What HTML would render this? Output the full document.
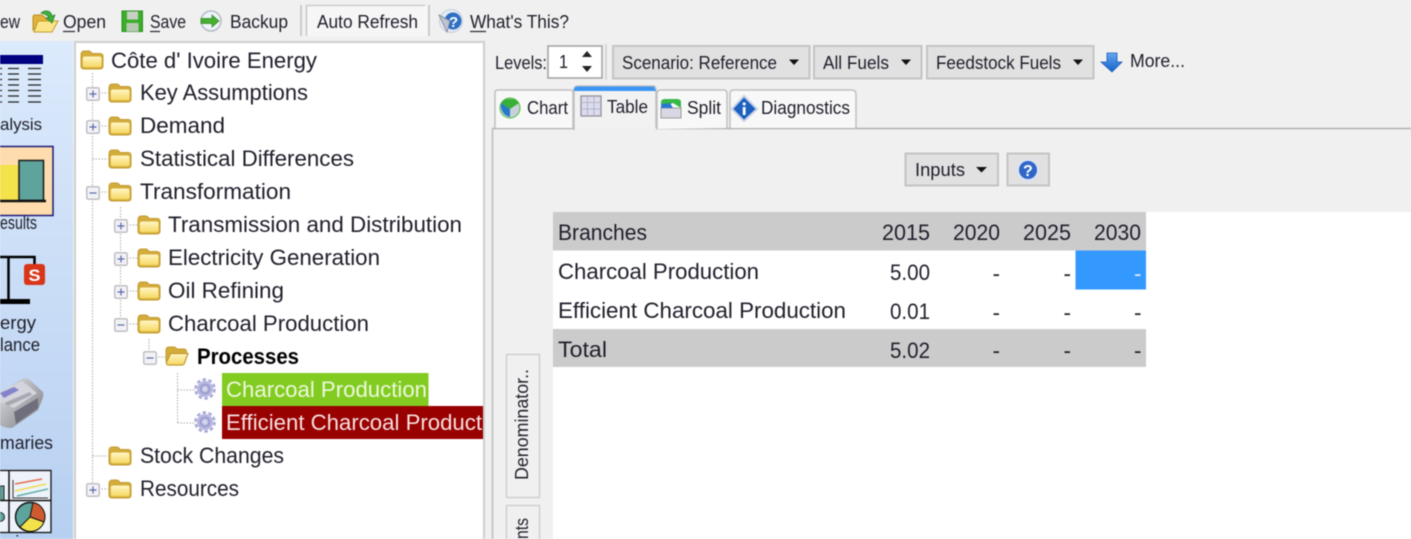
<!DOCTYPE html>
<html><head><meta charset="utf-8"><style>
html,body{margin:0;padding:0;background:#f0f0f0;width:1411px;height:539px;overflow:hidden}
svg{display:block;filter:blur(.45px)}
text{font-family:"Liberation Sans",sans-serif;fill:#20202c}
.t{font-size:22.5px}.m{font-size:18.5px}.d{stroke:#aaa;stroke-width:1;stroke-dasharray:1.5 1.5;fill:none}
.b{fill:#e1e1e1;stroke:#c4c4c4;stroke-width:2}
</style></head><body>
<svg width="1411" height="539" viewBox="0 0 1411 539" xmlns="http://www.w3.org/2000/svg">
<defs>
<linearGradient id="side" x1="0" y1="0" x2="0" y2="1"><stop offset="0" stop-color="#dceafc"/><stop offset="1" stop-color="#b7d0f1"/></linearGradient>
<linearGradient id="fg" x1="0" y1="0" x2="0" y2="1"><stop offset="0" stop-color="#fff6c4"/><stop offset="1" stop-color="#f5d862"/></linearGradient>
<linearGradient id="bl" x1="0" y1="0" x2="0" y2="1"><stop offset="0" stop-color="#62a8f0"/><stop offset="1" stop-color="#1560c8"/></linearGradient>
<linearGradient id="sm" x1="0" y1="0" x2="1" y2="1"><stop offset="0" stop-color="#e4e4ea"/><stop offset="1" stop-color="#77777f"/></linearGradient>
<symbol id="folder" viewBox="0 0 24 20" overflow="visible">
<path d="M1 5Q1 1 4.500 1H8.500Q10.500 1 12 3.500H20Q23 3.500 23 6.500V16Q23 19 20 19H4Q1 19 1 16Z" fill="#d4ac3c" stroke="#c29a30" stroke-width="1"/>
<path d="M2.800 8.500Q2.800 6.500 5 6.500H19.500Q21.500 6.500 21.500 8.500V15.500Q21.500 17.300 19.500 17.300H4.800Q2.800 17.300 2.800 15.500Z" fill="url(#fg)"/>
</symbol>
<symbol id="ofolder" viewBox="0 0 24 20" overflow="visible">
<path d="M1 15V4.500Q1 1 4 1H8.500Q10.500 1 12 3H19Q21.500 3 21.500 6V9H7Z" fill="#d4ac3c" stroke="#c29a30"/>
<path d="M5.500 7.500H23L19.500 17Q19 19 17 19H3.500Q1 19 1.500 16.500Z" fill="url(#fg)" stroke="#c29a30" stroke-width="1.200"/>
</symbol>
<symbol id="plus" viewBox="0 0 14 14" overflow="visible">
<rect x=".75" y=".75" width="12.500" height="12.500" rx="1.500" fill="#f2f2f6" stroke="#c0c0c4" stroke-width="1.500"/>
<path d="M3.500 7H10.500M7 3.500V10.500" stroke="#5a6aa8" stroke-width="1.200"/>
</symbol>
<symbol id="minus" viewBox="0 0 14 14" overflow="visible">
<rect x=".75" y=".75" width="12.500" height="12.500" rx="1.500" fill="#f2f2f6" stroke="#c0c0c4" stroke-width="1.500"/>
<path d="M3.500 7H10.500" stroke="#5a6aa8" stroke-width="1.200"/>
</symbol>
<symbol id="gear" viewBox="0 0 22 22" overflow="visible">
<circle cx="11" cy="11" r="8" fill="#b6b6e0"/>
<circle cx="11" cy="11" r="9.500" fill="none" stroke="#a8a8d8" stroke-width="2.500" stroke-dasharray="3.500 2.500"/>
<circle cx="11" cy="11" r="4.500" fill="none" stroke="#9a9acb" stroke-width="1.500"/>
<circle cx="11" cy="11" r="2.500" fill="#d4d4ec"/>
</symbol>
</defs>

<rect width="1411" height="539" fill="#f0f0f0"/>

<!-- sidebar -->
<rect x="0" y="41" width="73" height="498" fill="url(#side)"/>
<rect x="0" y="55" width="43" height="9" fill="#000080"/>
<path d="M0 68.500H2M8 68.500H19M28 68.500H41M0 74H2M8 74H19M28 74H41M0 79.500H2M8 79.500H19M28 79.500H41M0 85H2M8 85H19M28 85H41M0 90.500H2M8 90.500H19M28 90.500H41M0 96H2M8 96H19M28 96H41M0 102H2M8 102H19M28 102H41" stroke="#222" stroke-width="1.300"/>
<text x="0" y="130" textLength="42" lengthAdjust="spacingAndGlyphs" style="font-size:17px">alysis</text>
<rect x="-2" y="146.500" width="55" height="69" fill="#ffdcae" stroke="#1a1a78" stroke-width="1.500"/>
<rect x="0" y="165" width="19" height="35" fill="#f4e24a"/>
<rect x="19" y="160.500" width="24.500" height="40" fill="#5ea39c" stroke="#222" stroke-width="1.600"/>
<path d="M0 201H46" stroke="#111" stroke-width="2.500"/>
<text x="0" y="229" textLength="37" lengthAdjust="spacingAndGlyphs" style="font-size:18px">esults</text>
<path d="M0 257H34.500V265M8.500 257V300" fill="none" stroke="#000" stroke-width="2.500"/>
<path d="M0 301.500H30" stroke="#000" stroke-width="5"/>
<rect x="24" y="264" width="21" height="21" rx="3" fill="#d8361a"/>
<text x="28.500" y="281" style="font-size:17px;font-weight:bold;fill:#fff" textLength="12" lengthAdjust="spacingAndGlyphs">S</text>
<text x="0" y="329" textLength="36" lengthAdjust="spacingAndGlyphs" style="font-size:18px">ergy</text>
<text x="0" y="351" textLength="40" lengthAdjust="spacingAndGlyphs" style="font-size:18px">lance</text>
<path d="M0 394Q12 384 22 379Q26 377 30 380L43 392Q44 396 42 400L38 410L12 428Q4 428 0 425Z" fill="url(#sm)"/>
<path d="M0 392L22 381L37 393L14 408L0 402Z" fill="#d4d4dc"/>
<path d="M0 393L14 387L19 390L4 398Z" fill="#8484cc"/>
<path d="M4 403L30 392L32 395L8 406Z" fill="#a8a8b0"/>
<path d="M14 412L38 398L38 408L16 424Z" fill="#6e6e7c"/>
<text x="0" y="449" textLength="53" lengthAdjust="spacingAndGlyphs" style="font-size:18px">maries</text>
<rect x="-2" y="470.500" width="53" height="62" fill="#eef2fa" stroke="#111" stroke-width="1.300"/>
<path d="M9 470V532M0 500.500H51" stroke="#111" stroke-width="1.500"/>
<rect x="0" y="486" width="4" height="14" fill="#5ea39c" stroke="#222"/>
<path d="M13 480V498H48" fill="none" stroke="#333" stroke-width="1"/>
<path d="M15 484L42 479" stroke="#e07050" stroke-width="1.500"/>
<path d="M15 491L46 484" stroke="#eedc50" stroke-width="1.500"/>
<path d="M17 496L48 489" stroke="#60b0a8" stroke-width="1.500"/>
<circle cx="0" cy="517" r="4.500" fill="#5ea39c" stroke="#222"/>
<circle cx="30" cy="517" r="14.500" fill="#5ea39c" stroke="#111" stroke-width="1.400"/>
<path d="M30 517L33 502.500A14.500 14.500 0 0 1 44 522Z" fill="#d05a30" stroke="#111"/>
<path d="M30 517L44 522A14.500 14.500 0 0 1 20 527Z" fill="#f4e24a" stroke="#111"/>
<rect x="16.500" y="535" width="1.500" height="1.500" fill="#222"/>

<!-- toolbar -->
<text x="0" y="28" class="m" textLength="20" lengthAdjust="spacingAndGlyphs">ew</text>
<path d="M33 30V17Q33 15 35 15H42L47 19H53V24H39Z" fill="#e0b23a" stroke="#b8901f"/>
<path d="M38 21H58L52 32H34Z" fill="#fbe48a" stroke="#c49c28"/>
<path d="M41 13C46 9 51 11 52 16L55 15L52 23L46 18L49 17.500C47 14.500 44 14 41 13Z" fill="#42ae3e" stroke="#237c25" stroke-width=".7"/>
<text x="63" y="28" class="m" textLength="43" lengthAdjust="spacingAndGlyphs">Open</text>
<path d="M63 31.500H75" stroke="#252530" stroke-width="1.200"/>
<rect x="122" y="11" width="20.500" height="20.500" fill="#3cae2a" stroke="#2a9020"/>
<rect x="127" y="11.500" width="11" height="8" fill="#c8d0c4"/>
<rect x="126.500" y="23" width="12" height="8.500" fill="#b8c8b4"/>
<text x="150" y="28" class="m" textLength="36" lengthAdjust="spacingAndGlyphs">Save</text>
<path d="M150 31.500H160" stroke="#252530" stroke-width="1.200"/>
<circle cx="211" cy="21" r="10" fill="#eef3fa" stroke="#b4bcc6" stroke-width="1.500"/>
<path d="M220 21L213 15V18.500H202V23.500H213V27Z" transform="translate(-1 0)" fill="#48b030" stroke="#2a8a20" stroke-width=".7"/>
<text x="230" y="28" class="m" textLength="58" lengthAdjust="spacingAndGlyphs">Backup</text>
<path d="M301 5V36M429 5V36" stroke="#c0c0c0" stroke-width="1.500"/>
<rect x="306.500" y="5.500" width="121" height="31" fill="#f6f6f6"/>
<path d="M306.500 36V5.500H425" fill="none" stroke="#c4c4c4" stroke-width="1.300"/>
<text x="317" y="28" class="m" textLength="101" lengthAdjust="spacingAndGlyphs">Auto Refresh</text>
<circle cx="451" cy="21" r="11.500" fill="#e4eaf2" stroke="#c4cedc"/>
<circle cx="453" cy="21" r="8.500" fill="#2f6fc4"/>
<path d="M439 15L450 21L447 32Z" fill="#c0c4d0" stroke="#7a8292" stroke-width=".8"/>
<text x="449" y="27" style="font-size:15px;font-weight:bold;fill:#fff">?</text>
<text x="470" y="28" class="m" textLength="99" lengthAdjust="spacingAndGlyphs">What's This?</text>
<path d="M470 31.500H486" stroke="#252530" stroke-width="1.200"/>

<!-- tree -->
<rect x="75" y="42" width="409" height="498" fill="#fff" stroke="#cfcfcf" stroke-width="2"/>
<path class="d" d="M92.500 73V489M92.500 159H108M92.500 456H108M92.500 93H108M92.500 126H108M92.500 192H108M92.500 489H108"/>
<path class="d" d="M120.500 207V324M120.500 225H137M120.500 258H137M120.500 291H137M120.500 324H137"/>
<path class="d" d="M149 339V357M149 357H165"/>
<path class="d" d="M177.500 373V423M177.500 390H195M177.500 423H195"/>
<use href="#plus" x="86" y="87" width="14" height="14"/>
<use href="#plus" x="86" y="120" width="14" height="14"/>
<use href="#minus" x="86" y="186" width="14" height="14"/>
<use href="#plus" x="114" y="219" width="14" height="14"/>
<use href="#plus" x="114" y="252" width="14" height="14"/>
<use href="#plus" x="114" y="285" width="14" height="14"/>
<use href="#minus" x="114" y="318" width="14" height="14"/>
<use href="#minus" x="143" y="351" width="14" height="14"/>
<use href="#plus" x="86" y="483" width="14" height="14"/>
<use href="#folder" x="80" y="50" width="24" height="20"/>
<use href="#folder" x="108" y="83" width="24" height="20"/>
<use href="#folder" x="108" y="116" width="24" height="20"/>
<use href="#folder" x="108" y="149" width="24" height="20"/>
<use href="#folder" x="108" y="182" width="24" height="20"/>
<use href="#folder" x="137" y="215" width="24" height="20"/>
<use href="#folder" x="137" y="248" width="24" height="20"/>
<use href="#folder" x="137" y="281" width="24" height="20"/>
<use href="#folder" x="137" y="314" width="24" height="20"/>
<use href="#ofolder" x="165" y="346" width="24" height="20"/>
<use href="#folder" x="108" y="446" width="24" height="20"/>
<use href="#folder" x="108" y="479" width="24" height="20"/>
<use href="#gear" x="194" y="378" width="22" height="22"/>
<use href="#gear" x="194" y="411" width="22" height="22"/>
<text x="111" y="68" class="t" textLength="206" lengthAdjust="spacingAndGlyphs">Côte d' Ivoire Energy</text>
<text x="140" y="100" class="t" textLength="168" lengthAdjust="spacingAndGlyphs">Key Assumptions</text>
<text x="140" y="133" class="t" textLength="85" lengthAdjust="spacingAndGlyphs">Demand</text>
<text x="140" y="166" class="t" textLength="214" lengthAdjust="spacingAndGlyphs">Statistical Differences</text>
<text x="140" y="199" class="t" textLength="151" lengthAdjust="spacingAndGlyphs">Transformation</text>
<text x="168" y="232" class="t" textLength="294" lengthAdjust="spacingAndGlyphs">Transmission and Distribution</text>
<text x="168" y="265" class="t" textLength="212" lengthAdjust="spacingAndGlyphs">Electricity Generation</text>
<text x="168" y="298" class="t" textLength="116" lengthAdjust="spacingAndGlyphs">Oil Refining</text>
<text x="168" y="331" class="t" textLength="201" lengthAdjust="spacingAndGlyphs">Charcoal Production</text>
<text x="197" y="364" class="t" textLength="102" lengthAdjust="spacingAndGlyphs" style="font-weight:bold;fill:#000">Processes</text>
<rect x="222" y="373" width="206.500" height="33" fill="#82cc22"/>
<text x="226" y="397" class="t" textLength="201" lengthAdjust="spacingAndGlyphs" style="fill:#eef8dc">Charcoal Production</text>
<rect x="222" y="406" width="261" height="33" fill="#990000"/>
<text x="226" y="430" class="t" textLength="256" lengthAdjust="spacingAndGlyphs" style="fill:#f6e0e0">Efficient Charcoal Product</text>
<text x="140" y="463" class="t" textLength="144" lengthAdjust="spacingAndGlyphs">Stock Changes</text>
<text x="140" y="496" class="t" textLength="99" lengthAdjust="spacingAndGlyphs">Resources</text>

<!-- right top bar -->
<text x="495" y="69" class="m" textLength="52" lengthAdjust="spacingAndGlyphs">Levels:</text>
<rect x="548" y="46" width="54" height="32" fill="#fff" stroke="#a0a0a0" stroke-width="1.500"/>
<text x="559" y="68" class="m" textLength="9" lengthAdjust="spacingAndGlyphs">1</text>
<path d="M582 57L587 51L592 57ZM582 66L592 66L587 72Z" fill="#222"/>
<path d="M606 44V80" stroke="#cfcfcf" stroke-width="1.500"/>
<rect x="613" y="46" width="196.500" height="32.500" class="b"/>
<text x="622" y="69" class="m" textLength="155" lengthAdjust="spacingAndGlyphs">Scenario: Reference</text>
<path d="M789 59.500H799L794 65Z" fill="#111"/>
<rect x="814" y="46" width="107.500" height="32.500" class="b"/>
<text x="823" y="69" class="m" textLength="66" lengthAdjust="spacingAndGlyphs">All Fuels</text>
<path d="M901 59.500H911L906 65Z" fill="#111"/>
<rect x="927" y="46" width="166.500" height="32.500" class="b"/>
<text x="936" y="69" class="m" textLength="125" lengthAdjust="spacingAndGlyphs">Feedstock Fuels</text>
<path d="M1073 59.500H1083L1078 65Z" fill="#111"/>
<path d="M1107 53H1117V62H1122L1112 72L1101 62H1107Z" fill="url(#bl)" stroke="#1a5cb8" stroke-width=".8"/>
<text x="1130" y="67" class="m" textLength="55" lengthAdjust="spacingAndGlyphs">More...</text>

<!-- tabs -->
<rect x="492.800" y="129" width="919" height="410" fill="#f0f0f0"/>
<path d="M492 128.500H1411" fill="none" stroke="#b0b0b0" stroke-width="1.500"/>
<path d="M492.500 128V539" fill="none" stroke="#bcbcbc" stroke-width="1.500"/>
<path d="M495 128V93Q495 90 498 90H571Q573 90 573 93V128" fill="#f8f8f8" stroke="#c0c0c0" stroke-width="1.500"/>
<circle cx="510" cy="108" r="10" fill="#c8d0d8" stroke="#48c040" stroke-width="1"/>
<path d="M501 103C505 97 516 98 519 103L510 109Z" fill="#38b038"/>
<path d="M501 103L510 109V117C504 116 500 110 501 103Z" fill="#2878c8"/>
<text x="527" y="114" class="m" textLength="41" lengthAdjust="spacingAndGlyphs">Chart</text>
<path d="M657 129V94Q657 90 660 90H724Q727 90 727 94V128" fill="#f8f8f8" stroke="#c0c0c0" stroke-width="1.500"/>
<rect x="661" y="108" width="20" height="10" fill="#d8d8e4" stroke="#999"/>
<path d="M661 108V102Q661 99 665 99H677Q681 99 681 102V108L673 103Z" fill="#38b848"/>
<path d="M661 108V104L670 103L673 108Z" fill="#2878d0"/>
<text x="687" y="114" class="m" textLength="34" lengthAdjust="spacingAndGlyphs">Split</text>
<path d="M730 128V94Q730 90 733 90H852Q856 90 856 94V128" fill="#f8f8f8" stroke="#c0c0c0" stroke-width="1.500"/>
<path d="M744 96L757 109L744 121L732 109Z" fill="#1c60c0" stroke="#c8d2e6" stroke-width="2"/>
<rect x="742.800" y="107" width="2.800" height="8" fill="#fff"/><rect x="742.800" y="102.500" width="2.800" height="2.800" fill="#fff"/>
<text x="761" y="114" class="m" textLength="89" lengthAdjust="spacingAndGlyphs">Diagnostics</text>
<path d="M574 130V90Q574 86 578 86H653Q656 86 656 90V130" fill="#f2f2f2" stroke="#c0c0c0" stroke-width="1.500"/>
<path d="M574 89.500Q574 86.500 578 86.500H654L656 91H574Z" fill="#3a96f5"/>
<rect x="575" y="127.500" width="81" height="3.500" fill="#f0f0f0"/>
<rect x="581" y="96" width="20" height="20" fill="#dcdcf0" stroke="#909098" stroke-width="1.300"/>
<path d="M587.500 96V116M594 96V116M581 102.500H601M581 109H601" stroke="#b4b4c4" stroke-width="1"/>
<text x="607" y="113" class="m" textLength="41" lengthAdjust="spacingAndGlyphs">Table</text>

<!-- inputs -->
<rect x="905.500" y="153.500" width="92.500" height="32" class="b"/>
<text x="915" y="176" class="m" textLength="50" lengthAdjust="spacingAndGlyphs">Inputs</text>
<path d="M976 167H987L981.500 172.500Z" fill="#111"/>
<rect x="1007.500" y="153.500" width="41.500" height="32" class="b"/>
<circle cx="1028" cy="170" r="11" fill="#d9e4f6"/>
<circle cx="1028" cy="170" r="9" fill="#2f66c8"/>
<text x="1023" y="176" style="font-size:16px;font-weight:bold;fill:#fff">?</text>

<!-- grid -->
<rect x="553" y="212" width="858" height="327" fill="#fff"/>
<rect x="553" y="212" width="593" height="38.500" fill="#cbcbcc"/>
<rect x="553" y="329" width="593" height="38" fill="#cbcbcc"/>
<rect x="1075.500" y="250.500" width="70.500" height="39" fill="#3399ff"/>
<text x="558" y="240" class="t" textLength="89" lengthAdjust="spacingAndGlyphs">Branches</text>
<text x="882" y="240" class="t" textLength="48" lengthAdjust="spacingAndGlyphs">2015</text>
<text x="953" y="240" class="t" textLength="47" lengthAdjust="spacingAndGlyphs">2020</text>
<text x="1023" y="240" class="t" textLength="48" lengthAdjust="spacingAndGlyphs">2025</text>
<text x="1094" y="240" class="t" textLength="47" lengthAdjust="spacingAndGlyphs">2030</text>
<text x="558" y="279" class="t" textLength="201" lengthAdjust="spacingAndGlyphs">Charcoal Production</text>
<text x="890" y="280" class="t" textLength="40" lengthAdjust="spacingAndGlyphs">5.00</text>
<text x="558" y="318" class="t" textLength="288" lengthAdjust="spacingAndGlyphs">Efficient Charcoal Production</text>
<text x="890" y="319" class="t" textLength="40" lengthAdjust="spacingAndGlyphs">0.01</text>
<text x="558" y="357" textLength="49" lengthAdjust="spacingAndGlyphs" style="font-size:22px">Total</text>
<text x="890" y="358" class="t" textLength="40" lengthAdjust="spacingAndGlyphs">5.02</text>
<text x="992.500" y="281" class="t">-</text><text x="1063.500" y="281" class="t">-</text><text x="1134" y="281" class="t" style="fill:#dcecff">-</text>
<text x="992.500" y="320" class="t">-</text><text x="1063.500" y="320" class="t">-</text><text x="1134" y="320" class="t">-</text>
<text x="992.500" y="358" class="t">-</text><text x="1063.500" y="358" class="t">-</text><text x="1134" y="358" class="t">-</text>

<!-- vertical tabs -->
<rect x="506.500" y="354.500" width="33" height="143" fill="#f0f0f0" stroke="#d0d0d0" stroke-width="1.500"/>
<rect x="506.500" y="505.500" width="33" height="50" fill="#f0f0f0" stroke="#d0d0d0" stroke-width="1.500"/>
<text transform="translate(528 480) rotate(-90)" class="m" textLength="111" lengthAdjust="spacingAndGlyphs">Denominator..</text>
<text transform="translate(528 539) rotate(-90)" class="m" textLength="21" lengthAdjust="spacingAndGlyphs">nts</text>
</svg>
</body></html>
